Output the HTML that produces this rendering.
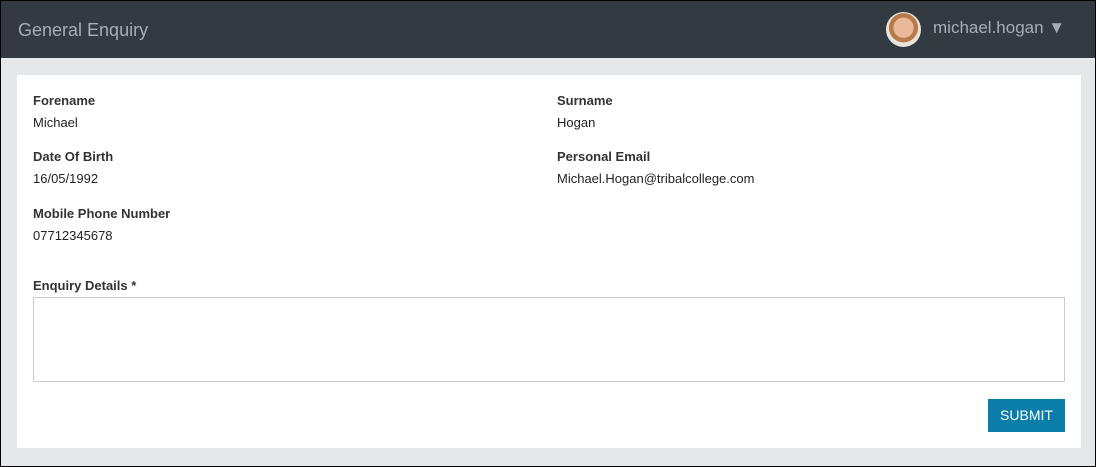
<!DOCTYPE html>
<html><head><style>
*{box-sizing:border-box;margin:0;padding:0}
body{width:1096px;height:467px;overflow:hidden;font-family:"Liberation Sans",sans-serif;background:#000}
.wrap{position:absolute;left:1px;top:1px;width:1094px;height:465px;background:#e4e8eb}
.hdr{position:absolute;left:0;top:0;width:1094px;height:57px;background:#343a42}
.title{position:absolute;left:17px;top:19px;font-size:18px;color:#a8adb2}
.user{position:absolute;left:932px;top:17px;font-size:17px;color:#a8adb2}
.av{position:absolute;left:885px;top:11px;width:35px;height:35px;border-radius:50%;background:radial-gradient(circle at 50% 45%,#e9b99a 0 38%,#b87a4a 40% 55%,#e8e4dc 57%)}
.panel{position:absolute;left:16px;top:74px;width:1064px;height:373px;background:#fff}
.l{position:absolute;font-size:13px;font-weight:bold;color:#333}
.v{position:absolute;font-size:13px;color:#222}
.ta{position:absolute;left:16px;top:222px;width:1032px;height:85px;border:1px solid #ccc}
.btn{position:absolute;left:971px;top:324px;width:77px;height:33px;background:#0a7ea8;color:#fff;font-size:14px;text-align:center;line-height:33px}
</style></head><body><div class="wrap">
<div class="hdr"><div class="title">General Enquiry</div><div class="av"></div><div class="user">michael.hogan ▼</div></div>
<div class="panel">
<div class="l" style="left:16px;top:18px">Forename</div><div class="v" style="left:16px;top:40px">Michael</div>
<div class="l" style="left:540px;top:18px">Surname</div><div class="v" style="left:540px;top:40px">Hogan</div>
<div class="l" style="left:16px;top:74px">Date Of Birth</div><div class="v" style="left:16px;top:96px">16/05/1992</div>
<div class="l" style="left:540px;top:74px">Personal Email</div><div class="v" style="left:540px;top:96px">Michael.Hogan@tribalcollege.com</div>
<div class="l" style="left:16px;top:131px">Mobile Phone Number</div><div class="v" style="left:16px;top:153px">07712345678</div>
<div class="l" style="left:16px;top:203px">Enquiry Details *</div>
<div class="ta"></div>
<div class="btn">SUBMIT</div>
</div></div></body></html>
